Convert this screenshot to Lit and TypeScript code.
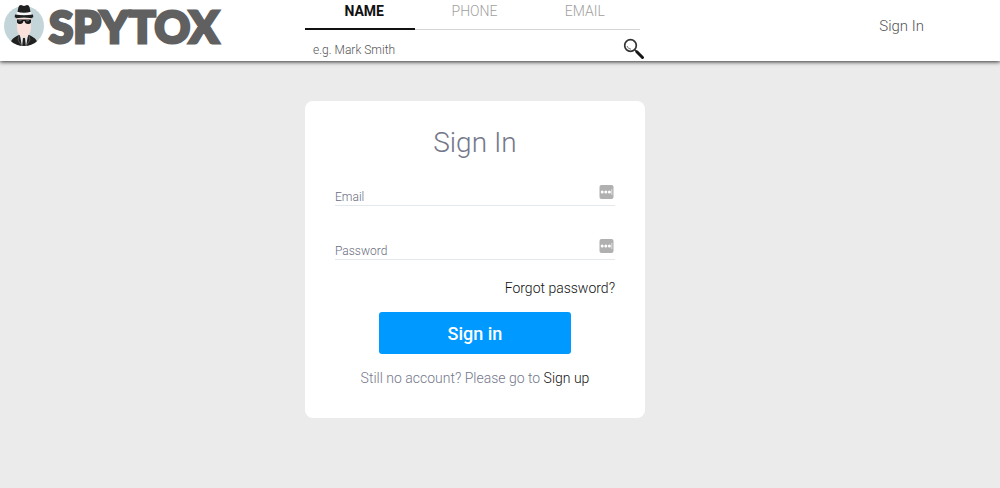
import { LitElement, html, css, svg } from "lit";
import { customElement, property, state } from "lit/decorators.js";
import { classMap } from "lit/directives/class-map.js";

const TABS = [
  { label: "NAME", hint: "e.g. Mark Smith" },
  { label: "PHONE", hint: "" },
  { label: "EMAIL", hint: "" },
];

const spyIcon = svg`
  <defs><clipPath id="disc"><circle cx="24" cy="26" r="20"/></clipPath></defs>
  <circle cx="24" cy="26" r="20" fill="#c3d5d9"/>
  <g clip-path="url(#disc)">
    <path d="M10 47c0-6 2-9 9-12h10c7 3 9 6 9 12z" fill="#202020"/>
    <path d="M20 31h8v5l-4 4-4-4z" fill="#f0cfc8"/>
    <path d="M20 35l4 3 4-3-2 12h-4z" fill="#e8e8e8"/>
    <path d="M23 38h2l1 9h-4z" fill="#202020"/>
    <path d="M19 36l-1 4 4 6M29 36l1 4-4 6" fill="none" stroke="#666" stroke-width="0.8"/>
  </g>
  <path d="M17 18h14v10c0 4-2 9-7 9s-7-5-7-9z" fill="#fae1dc"/>
  <path d="M17 19.500h14v3q-1 1.500-3 1.500-3 0-3.500-3h-1q-.5 3-3.500 3-2 0-3-1.500z" fill="#151515"/>
  <path d="M18.500 21l3-.5M26 21l3-.5" stroke="#777" stroke-width="0.900"/>
  <path d="M17 14L18.500 7q.5-2 2.500-2l3 1 3-1q2 0 2.500 2L31 14z" fill="#202020"/>
  <path d="M17 11.800q7 2 14 0l.5 3q-7.500 1.500-15 0z" fill="#f8f8f8"/>
  <path d="M15 14.500q9 1.500 18 0l.3 2.500q-1 1.500-3.300 1-6-1.200-12 0-2.300.5-3.300-1z" fill="#202020"/>`;

@customElement("form-field")
export class FormField extends LitElement {
  @property() label = "";
  @property() type = "text";

  static styles = css`
    :host { display: block; }
    .field {
      display: flex;
      align-items: center;
      height: 28px;
      border-bottom: 1px solid #e3e8ec;
    }
    input {
      flex: 1;
      min-width: 0;
      height: 28px;
      padding: 12px 0 0;
      box-sizing: border-box;
      border: 0;
      outline: 0;
      background: none;
      color: #333;
      font: 300 12px/16px Roboto, sans-serif;
    }
    input::placeholder { color: #696d80; opacity: 1; }
    svg { display: block; margin-right: 1px; }
  `;

  render() {
    return html`
      <div class="field">
        <input type=${this.type} placeholder=${this.label} aria-label=${this.label} />
        <svg width="15" height="16" viewBox="0 0 15 16" aria-hidden="true">
          <rect x="0.5" y="2" width="14" height="14" rx="2" fill="#b0b0b0" />
          <circle cx="3.200" cy="9" r="1.500" fill="#fff" />
          <circle cx="6.800" cy="9" r="1.500" fill="#fff" />
          <circle cx="10.400" cy="9" r="1.500" fill="#fff" />
          <path d="M12.800 6v6" stroke="#e4e4e4" stroke-width="0.900" />
        </svg>
      </div>`;
  }
}

@customElement("app-root")
export class AppRoot extends LitElement {
  @state() private active = 0;

  static styles = css`
    :host {
      display: block;
      min-height: 100vh;
      background: #ebebeb;
      font-family: Roboto, sans-serif;
      font-weight: 300;
    }
    a { text-decoration: none; }
    button { border: 0; cursor: pointer; font-family: inherit; }
    header {
      display: grid;
      grid-template-columns: 1fr 340px 1fr;
      height: 61px;
      padding-right: 50px;
      background: #fff;
      box-shadow: 0 1px 4px rgba(0, 0, 0, 0.8);
    }
    .brand {
      display: flex;
      align-items: flex-start;
      gap: 4px;
      padding-left: 4px;
      color: #606060;
    }
    .brand svg { flex: none; margin-top: 4px; }
    .word {
      font: 900 44px/53px Lato, sans-serif;
      -webkit-text-stroke: 3px #606060;
    }
    .tabs {
      display: grid;
      grid-template-columns: repeat(3, 1fr);
      margin-right: 5px;
      padding-right: 4px;
      box-shadow: inset 0 -1px #d4d4d4;
    }
    .tab {
      height: 30px;
      padding: 0 0 6px 8px;
      background: none;
      border-bottom: 2px solid transparent;
      color: #a0a0a0;
      font-size: 14px;
      font-weight: 300;
    }
    .tab.on {
      border-bottom-color: #111;
      color: #111;
      font-weight: 700;
    }
    .search { display: flex; align-items: center; height: 30px; padding: 4px 0 0 8px; }
    .search input {
      flex: 1;
      min-width: 0;
      padding: 2px 0 0;
      border: 0;
      outline: 0;
      background: none;
      font: 300 12px/16px Roboto, sans-serif;
    }
    .search input::placeholder { color: #555; opacity: 1; }
    .go { padding: 0; background: none; }
    .go svg { display: block; }
    .account {
      justify-self: end;
      padding: 17px 26px 0 0;
      color: #555;
      font-size: 15px;
      line-height: 18px;
    }
    main { display: flex; justify-content: center; padding: 40px 50px 40px 0; }
    .card {
      width: 340px;
      box-sizing: border-box;
      padding: 24px 30px 30px;
      border-radius: 8px;
      background: #fff;
      color: #74788a;
      font-size: 14px;
      line-height: 20px;
    }
    h1 { margin: 0 0 16px; font-size: 28px; font-weight: 300; line-height: 36px; text-align: center; }
    .fields { display: grid; gap: 25px; }
    .forgot { margin: 18px 0 14px; text-align: right; }
    .card a { color: #111; }
    .submit {
      display: block;
      width: 192px;
      height: 42px;
      margin: 0 auto 14px;
      border-radius: 3px;
      background: #0099ff;
      color: #fff;
      font-size: 18px;
      font-weight: 500;
    }
    .join { margin: 0; text-align: center; }
  `;

  render() {
    return html`
      <header>
        <a class="brand" href="#" aria-label="SPYTOX">
          <svg width="41" height="43" viewBox="4 4 41 43" aria-hidden="true">${spyIcon}</svg>
          <span class="word">SPYTOX</span>
        </a>
        <div>
          <div class="tabs">
            ${TABS.map(
              (t, i) => html`<button
                class=${classMap({ tab: true, on: i === this.active })}
                @click=${() => (this.active = i)}
              >${t.label}</button>`
            )}
          </div>
          <form class="search">
            <input type="text" aria-label="Search" placeholder=${TABS[this.active].hint} />
            <button class="go" type="button" aria-label="Search">
              <svg width="22" height="22" viewBox="0 0 22 22">
                <circle cx="7.500" cy="7.500" r="5.800" fill="#fff" stroke="#333" stroke-width="1.700" />
                <path d="M4 8q1 3 4 3.200" fill="none" stroke="#777" stroke-width="1" />
                <path d="M11.800 11.800l2 2" stroke="#333" stroke-width="1.600" />
                <path d="M13.800 13.800l5.700 5.700" stroke="#151515" stroke-width="3" stroke-linecap="round" />
              </svg>
            </button>
          </form>
        </div>
        <a class="account" href="#">Sign In</a>
      </header>
      <main>
        <form class="card">
          <h1>Sign In</h1>
          <div class="fields">
            <form-field label="Email" type="email"></form-field>
            <form-field label="Password" type="password"></form-field>
          </div>
          <div class="forgot"><a href="#">Forgot password?</a></div>
          <button class="submit" type="button">Sign in</button>
          <p class="join">Still no account? Please go to <a href="#">Sign up</a></p>
        </form>
      </main>`;
  }
}
